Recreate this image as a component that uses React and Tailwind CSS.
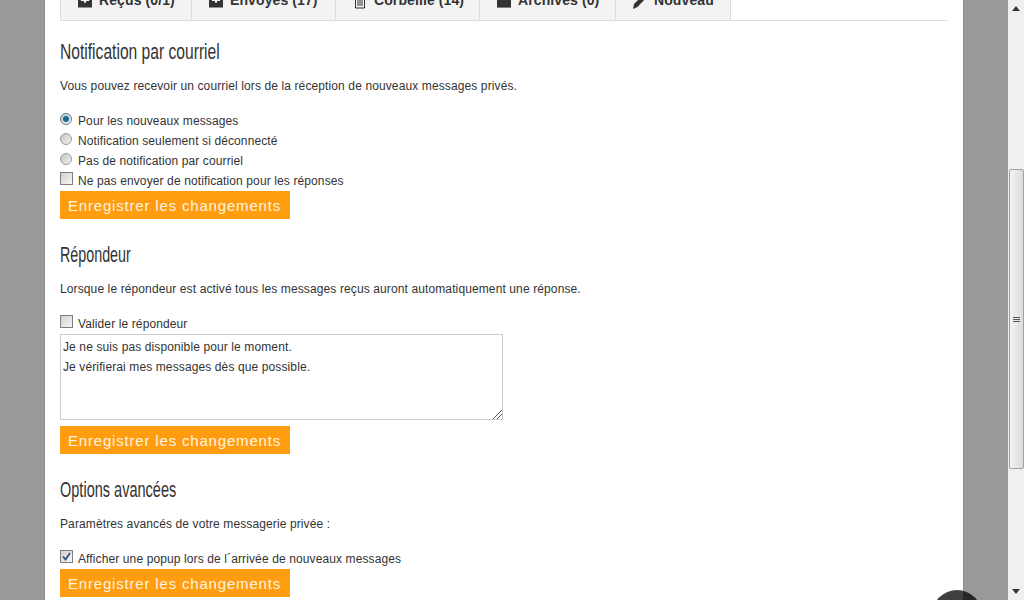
import React from "react";

const body = "font-['Liberation_Sans',Arial,sans-serif] text-[12px] text-[#333]";

function Tab({ w, icon, label }) {
  return (
    <div className="flex h-[32px] items-center gap-[7px] border-r border-[#ddd] bg-[#f3f3f3] pb-[8px] pl-[17px]" style={{ width: w }}>
      <span className="mt-[3px] flex w-[14px] justify-center">{icon}</span>
      <span className="text-[14px] font-bold tracking-[0.1px] text-[#333]">{label}</span>
    </div>
  );
}

const Tray = () => (
  <svg width="15" height="14" viewBox="0 0 15 14" fill="#333"><path d="M0 0h15v13H0z M3 1v5h3l1 2h1l1-2h3V1z" fillRule="evenodd" /></svg>
);
const Trash = () => (
  <svg width="14" height="15" viewBox="0 0 14 15" fill="none" stroke="#333" strokeWidth="1"><path d="M2.500 3v11h9V3M0 3h14M5 5v7M7 5v7M9 5v7" /></svg>
);
const Box = () => (
  <svg width="15" height="14" viewBox="0 0 15 14" fill="#333"><path d="M0 0h15v13H0z" /></svg>
);
const Pencil = () => (
  <svg width="14" height="15" viewBox="0 0 14 15" fill="#333"><path d="M10 1l3 3-8.500 9L0 15l1-5z" /></svg>
);

function Radio({ checked }) {
  return (
    <span className={`flex h-[12px] w-[12px] items-center justify-center rounded-full border ${checked ? "border-[#5c7f96]" : "border-[#9a9a9a]"} bg-[linear-gradient(135deg,#c4c4c4,#f4f4f4)]`}>
      {checked && <span className="h-[6px] w-[6px] rounded-full bg-[#176a90]" />}
    </span>
  );
}

function Check({ checked }) {
  return (
    <span className="flex h-[13px] w-[13px] items-center justify-center border border-[#7f7f7f] bg-[linear-gradient(135deg,#cfcfcf,#f7f7f7)]">
      {checked && (
        <svg width="9" height="9" viewBox="0 0 9 9" fill="none" stroke="#2d4f87" strokeWidth="1.8"><path d="M1 4.500l2.500 3L8 1" /></svg>
      )}
    </span>
  );
}

function Row({ control, children }) {
  return (
    <div className="flex h-[20px] items-center">
      <span className="-mt-[3px] flex w-[18px]">{control}</span>
      <span className="pt-[1px] tracking-[0.115px]">{children}</span>
    </div>
  );
}

function Save() {
  return (
    <div className="flex h-[28px] w-[230px] items-center justify-center bg-[#ff9c0f] pr-[1px] pt-[2px] text-[15px] tracking-[0.82px] text-[#fff3e0]">
      Enregistrer les changements
    </div>
  );
}

function Heading({ children, scale }) {
  return (
    <h2 className={`h-[24px] origin-left whitespace-nowrap font-['Liberation_Sans',sans-serif] text-[22px] leading-[24px] text-[#333] ${scale}`}>
      {children}
    </h2>
  );
}

export default function App() {
  return (
    <div className={`flex h-[600px] w-[1024px] overflow-hidden bg-[#999] ${body}`}>
      <div className="relative h-[600px] w-[1008px] overflow-hidden pl-[44px]">
        <div className="h-[640px] w-[920px] border-x border-[#8e8e8e] bg-white pl-[15px] pr-[15px]">
          <div className="mt-[-12px] flex w-[888px] border-b border-[#ddd] border-l">
            <Tab w={131} icon={<Tray />} label="Reçus (0/1)" />
            <Tab w={144} icon={<Tray />} label="Envoyés (17)" />
            <Tab w={144} icon={<Trash />} label="Corbeille (14)" />
            <Tab w={136} icon={<Box />} label="Archives (0)" />
            <Tab w={115} icon={<Pencil />} label="Nouveau" />
          </div>

          <div className="pt-[19px]">
            <Heading scale="scale-x-[0.71]">Notification par courriel</Heading>
          </div>
          <p className="mt-[12px] h-[20px] leading-[20px] tracking-[0.115px]">Vous pouvez recevoir un courriel lors de la réception de nouveaux messages privés.</p>
          <div className="mt-[14px]">
            <Row control={<Radio checked />}>Pour les nouveaux messages</Row>
            <Row control={<Radio />}>Notification seulement si déconnecté</Row>
            <Row control={<Radio />}>Pas de notification par courriel</Row>
            <Row control={<Check />}>Ne pas envoyer de notification pour les réponses</Row>
          </div>
          <div className="mt-[1px]"><Save /></div>

          <div className="mt-[24px]">
            <Heading scale="scale-x-[0.65]">Répondeur</Heading>
          </div>
          <p className="mt-[12px] h-[20px] leading-[20px] tracking-[0.115px]">Lorsque le répondeur est activé tous les messages reçus auront automatiquement une réponse.</p>
          <div className="mt-[14px]">
            <Row control={<Check />}>Valider le répondeur</Row>
          </div>
          <div className="relative mt-[1px] h-[86px] w-[443px] border border-[#ccc] px-[2px] py-[2px] leading-[20px] tracking-[0.115px]">
            <div>Je ne suis pas disponible pour le moment.</div>
            <div>Je vérifierai mes messages dès que possible.</div>
            <svg className="absolute bottom-0 right-0" width="9" height="9" viewBox="0 0 9 9" stroke="#555" strokeWidth="1"><path d="M0 9L9 0M4 9l5-5" /></svg>
          </div>
          <div className="mt-[6px]"><Save /></div>

          <div className="mt-[24px]">
            <Heading scale="scale-x-[0.66]">Options avancées</Heading>
          </div>
          <p className="mt-[12px] h-[20px] leading-[20px] tracking-[0.115px]">Paramètres avancés de votre messagerie privée :</p>
          <div className="mt-[14px]">
            <Row control={<Check checked />}>Afficher une popup lors de l´arrivée de nouveaux messages</Row>
          </div>
          <div className="mt-[1px]"><Save /></div>
        </div>
        <div className="absolute left-[932px] top-[590px] h-[50px] w-[50px] rounded-full bg-black/75" />
      </div>

      <div className="flex h-[600px] w-[16px] flex-col items-center bg-[#f0f0f0]">
        <div className="flex h-[17px] items-center justify-center">
          <svg width="8" height="5" viewBox="0 0 8 5" fill="#333"><path d="M4 0l4 5H0z" /></svg>
        </div>
        <div className="mt-[152px] flex h-[300px] w-[15px] items-center justify-center rounded-[2px] border border-[#a0a0a0] bg-[linear-gradient(90deg,#f2f2f2,#dcdcdc)]">
          <div className="flex flex-col gap-[1px]">
            <div className="h-[1px] w-[7px] bg-[#555]" />
            <div className="h-[1px] w-[7px] bg-[#555]" />
            <div className="h-[1px] w-[7px] bg-[#555]" />
          </div>
        </div>
        <div className="mt-auto flex h-[17px] items-center justify-center">
          <svg width="8" height="5" viewBox="0 0 8 5" fill="#333"><path d="M0 0h8L4 5z" /></svg>
        </div>
      </div>
    </div>
  );
}
